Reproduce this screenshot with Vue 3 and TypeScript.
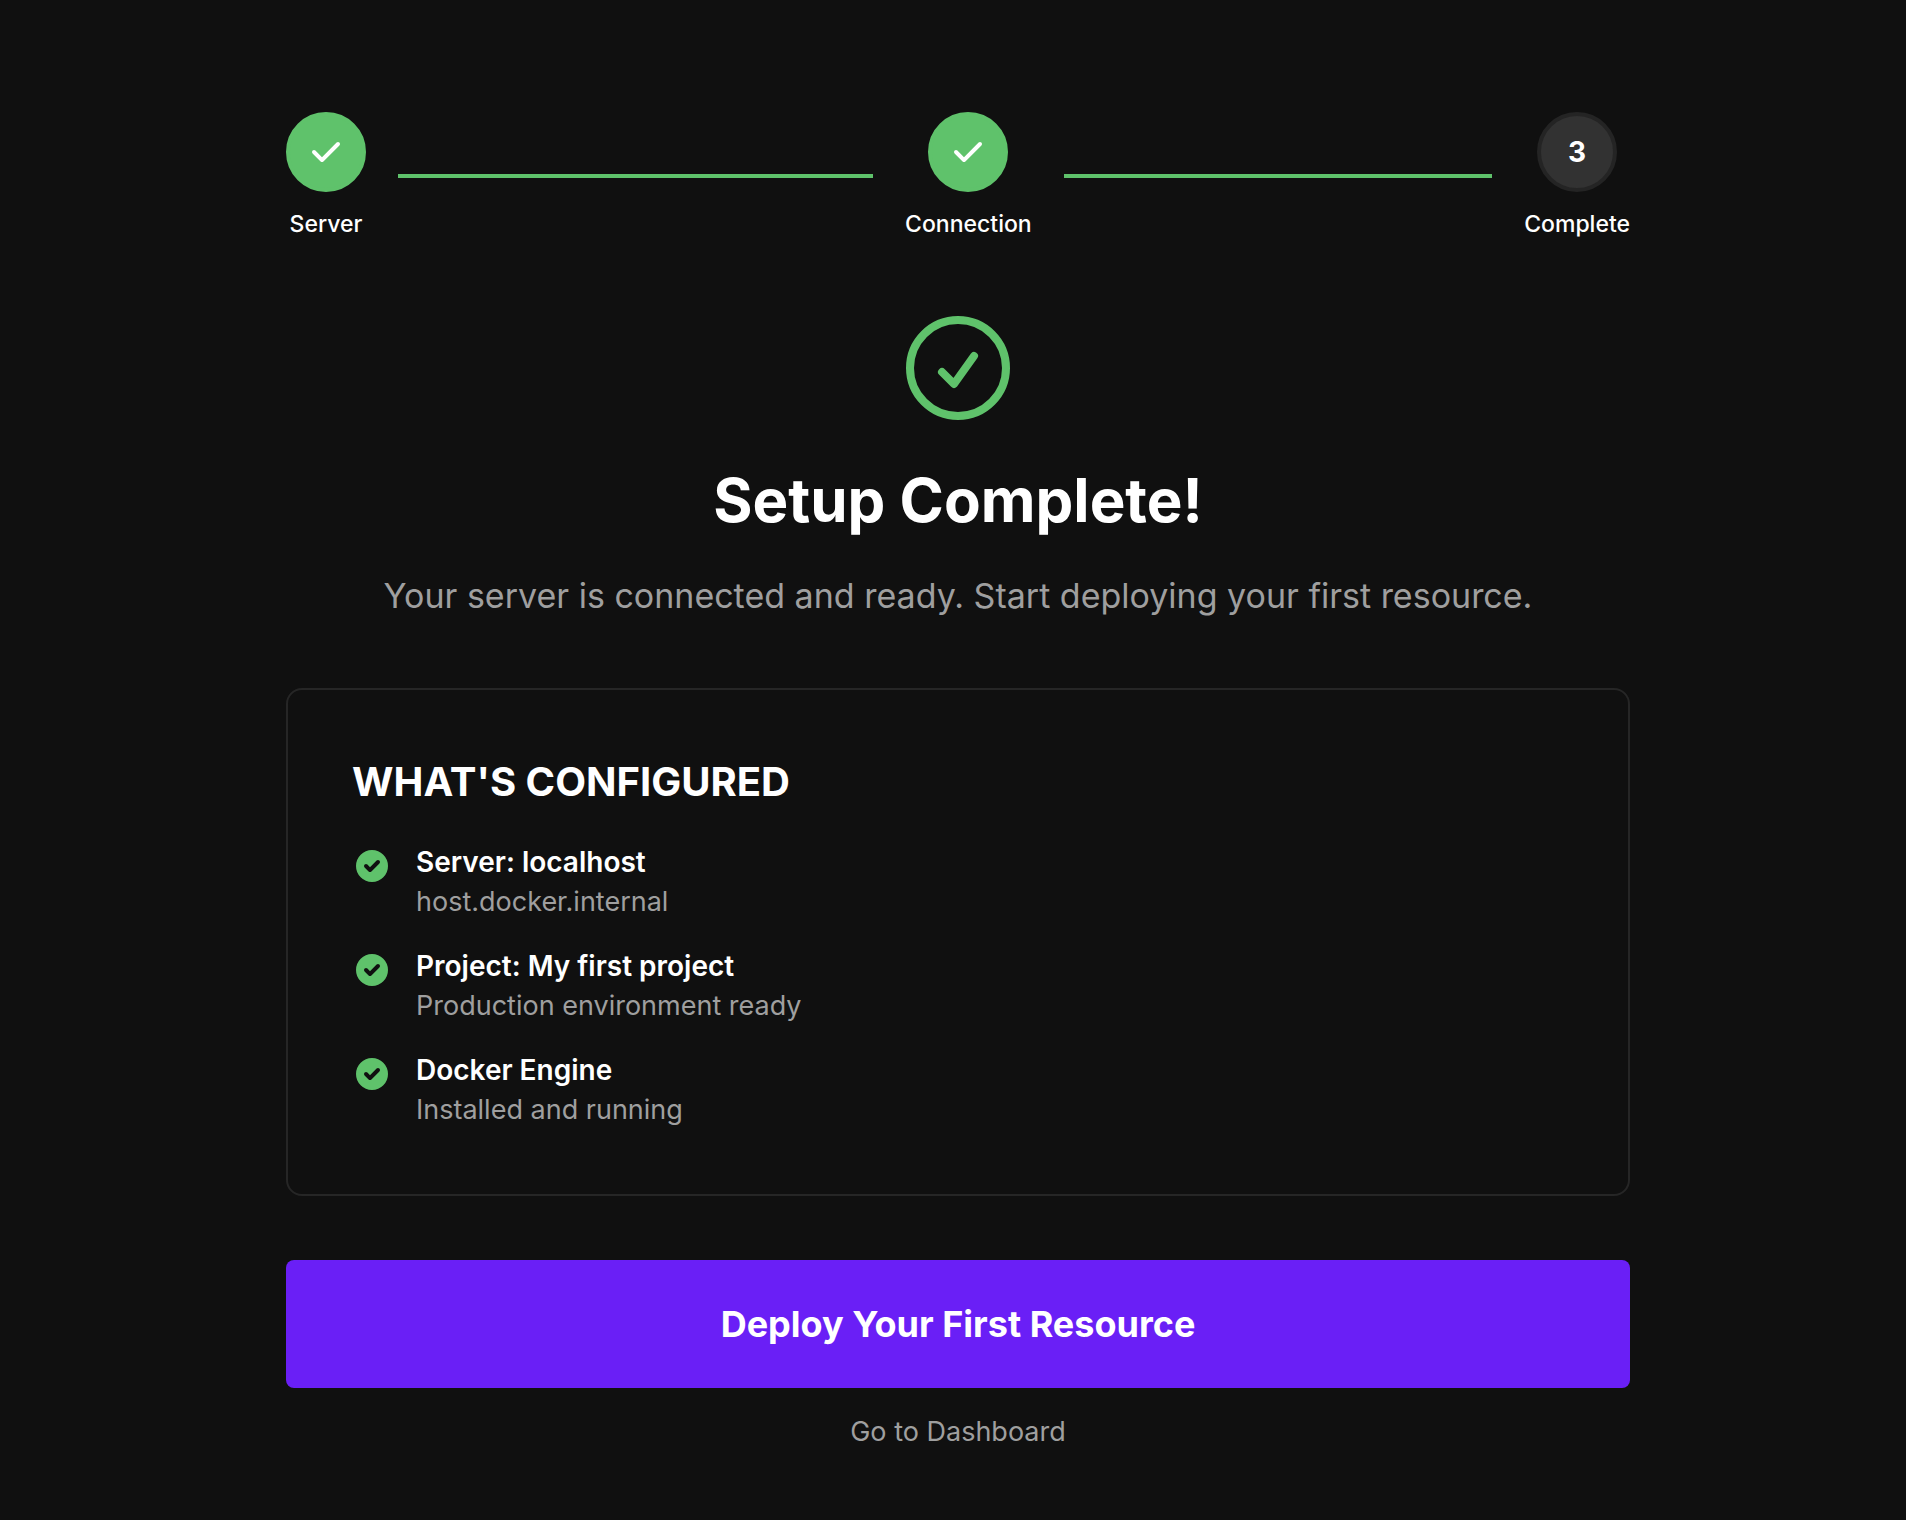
<script setup lang="ts">
interface Step {
  label: string
  done: boolean
}

interface ConfiguredItem {
  title: string
  detail: string
}

const steps: Step[] = [
  { label: 'Server', done: true },
  { label: 'Connection', done: true },
  { label: 'Complete', done: false },
]

const configured: ConfiguredItem[] = [
  { title: 'Server: localhost', detail: 'host.docker.internal' },
  { title: 'Project: My first project', detail: 'Production environment ready' },
  { title: 'Docker Engine', detail: 'Installed and running' },
]
</script>

<template>
  <main class="page">
    <div class="content">
      <ol class="steps">
        <li v-for="(step, index) in steps" :key="step.label" class="step">
          <div class="step-marker">
            <span class="step-circle" :class="{ done: step.done }">
              <svg v-if="step.done" class="step-check" viewBox="0 0 20 20" fill="currentColor" aria-hidden="true">
                <path
                  fill-rule="evenodd"
                  clip-rule="evenodd"
                  d="M16.707 5.293a1 1 0 010 1.414l-8 8a1 1 0 01-1.414 0l-4-4a1 1 0 011.414-1.414L8 12.586l7.293-7.293a1 1 0 011.414 0z"
                />
              </svg>
              <template v-else>{{ index + 1 }}</template>
            </span>
            <span class="step-label">{{ step.label }}</span>
          </div>
          <div v-if="index < steps.length - 1" class="step-line"></div>
        </li>
      </ol>

      <header class="intro">
        <svg
          class="intro-icon"
          viewBox="0 0 24 24"
          fill="none"
          stroke="currentColor"
          stroke-width="1.5"
          stroke-linecap="round"
          stroke-linejoin="round"
          aria-hidden="true"
        >
          <path d="M9 12.75L11.25 15 15 9.75M21 12a9 9 0 11-18 0 9 9 0 0118 0z" />
        </svg>
        <h1 class="title">Setup Complete!</h1>
        <p class="subtitle">Your server is connected and ready. Start deploying your first resource.</p>
      </header>

      <section class="card">
        <h2 class="card-title">What's Configured</h2>
        <ul class="items">
          <li v-for="item in configured" :key="item.title" class="item">
            <svg class="item-icon" viewBox="0 0 20 20" fill="currentColor" aria-hidden="true">
              <path
                fill-rule="evenodd"
                clip-rule="evenodd"
                d="M10 18a8 8 0 100-16 8 8 0 000 16zm3.707-9.293a1 1 0 00-1.414-1.414L9 10.586 7.707 9.293a1 1 0 00-1.414 1.414l2 2a1 1 0 001.414 0l4-4z"
              />
            </svg>
            <div>
              <div class="item-title">{{ item.title }}</div>
              <div class="item-detail">{{ item.detail }}</div>
            </div>
          </li>
        </ul>
      </section>

      <div class="actions">
        <button type="button" class="primary">Deploy Your First Resource</button>
        <a href="#" class="secondary">Go to Dashboard</a>
      </div>
    </div>
  </main>
</template>

<style>
body {
  margin: 0;
  background: #101010;
}
</style>

<style scoped>
.page {
  box-sizing: border-box;
  min-height: 100vh;
  padding: 112px 48px 64px 58px;
  background: #101010;
  color: #fff;
  font-family: Inter, "Liberation Sans", sans-serif;
}

.content {
  display: flex;
  flex-direction: column;
  gap: 64px;
  max-width: 1344px;
  margin: 0 auto;
}

.steps,
.items {
  margin: 0;
  padding: 0;
  list-style: none;
}

.steps {
  display: flex;
}

.step {
  display: flex;
  flex: 1;
  align-items: center;
}

.step:last-child {
  flex: none;
}

.step-marker {
  display: flex;
  flex-direction: column;
  align-items: center;
  gap: 16px;
}

.step-circle {
  box-sizing: border-box;
  display: flex;
  align-items: center;
  justify-content: center;
  width: 80px;
  height: 80px;
  border: 4px solid #242424;
  border-radius: 50%;
  background: #323232;
  font-size: 28px;
  font-weight: 700;
}

.step-circle.done {
  border-color: #5fc26b;
  background: #5fc26b;
}

.step-check {
  width: 40px;
  height: 40px;
}

.step-label {
  font-size: 23px;
  font-weight: 500;
  line-height: 32px;
}

.step-line {
  flex: 1;
  height: 4px;
  margin: 0 32px;
  background: #5fc26b;
}

.intro {
  display: flex;
  flex-direction: column;
  align-items: center;
  gap: 32px;
  text-align: center;
}

.intro-icon {
  width: 128px;
  height: 128px;
  color: #5fc26b;
}

.title,
.subtitle,
.card-title {
  margin: 0;
}

.title {
  font-size: 60px;
  font-weight: 700;
  line-height: 72px;
}

.subtitle {
  color: #9f9f9f;
  font-size: 34px;
  line-height: 56px;
}

.card {
  padding: 64px;
  border: 2px solid #262626;
  border-radius: 16px;
}

.card-title {
  margin-bottom: 32px;
  font-size: 40px;
  font-weight: 700;
  line-height: 56px;
  text-transform: uppercase;
}

.items {
  display: flex;
  flex-direction: column;
  gap: 24px;
}

.item {
  display: flex;
  gap: 24px;
  font-size: 28px;
  line-height: 40px;
}

.item-icon {
  flex: none;
  width: 40px;
  height: 40px;
  margin-top: 4px;
  color: #5fc26b;
}

.item-title {
  font-weight: 600;
}

.item-detail {
  color: #9f9f9f;
  font-size: 27px;
}

.actions {
  display: flex;
  flex-direction: column;
  align-items: center;
  gap: 24px;
}

.primary {
  width: 100%;
  padding: 36px 48px;
  border: 0;
  border-radius: 8px;
  background: #6a1ff6;
  color: #fff;
  font-family: inherit;
  font-size: 36px;
  font-weight: 700;
  line-height: 56px;
  cursor: pointer;
}

.secondary {
  color: #9f9f9f;
  font-size: 27px;
  line-height: 40px;
  text-decoration: none;
}
</style>
